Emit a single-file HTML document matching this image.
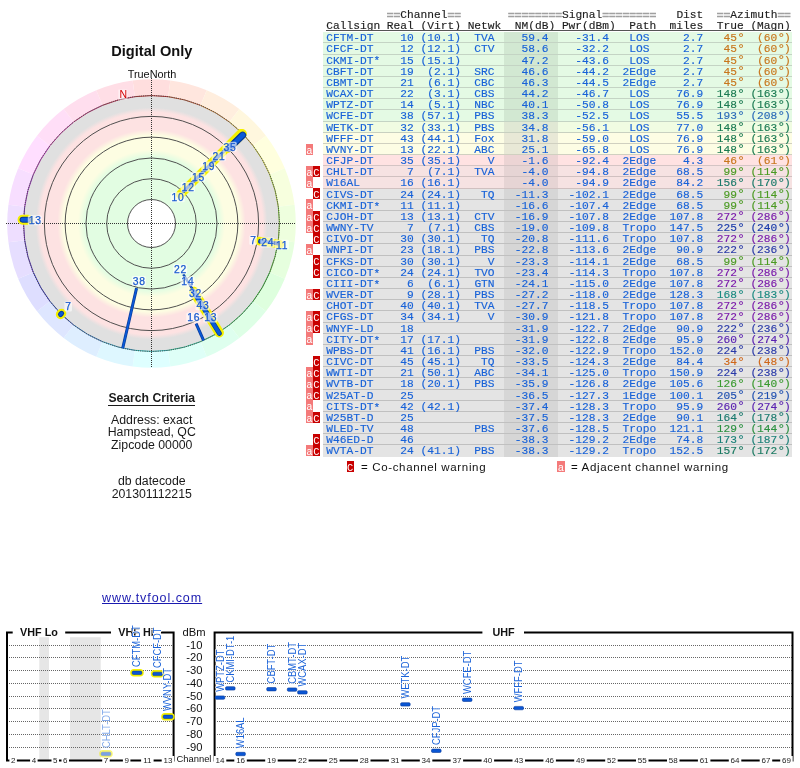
<!DOCTYPE html>
<html><head><meta charset="utf-8"><title>TV Signal Analysis</title><style>
html,body{margin:0;padding:0;background:#fff;}
body{width:800px;height:768px;overflow:hidden;position:relative;}
#wrap{position:absolute;left:0;top:0;width:800px;height:768px;will-change:transform;}
.tx{position:absolute;left:326.25px;font-family:"Liberation Mono",monospace;font-size:11.22px;line-height:11.18px;white-space:pre;color:#1862d8;-webkit-text-stroke:0.15px currentColor;}
.hd{color:#1e1e1e;}
.ast{position:relative;top:0.8px;}
.dg{display:inline-block;width:6.733px;font-size:13.5px;line-height:0;text-align:center;position:relative;top:0.6px;}
.eq{color:#a0a0a0;-webkit-text-stroke:0.7px #a0a0a0;position:relative;top:0.6px;}
.rb{position:absolute;left:323px;width:469px;height:11.18px;}
.nb{position:absolute;left:504px;width:54px;height:11.18px;}
.bd{position:absolute;left:323px;width:469px;height:1px;}
.wa,.wc{position:absolute;height:11.18px;line-height:15.4px;overflow:hidden;font-family:"Liberation Mono",monospace;font-size:10.5px;color:#fff;text-align:center;}
.wa{left:306px;width:6.8px;background:#f47a7a;}
.wc{left:312.8px;width:7.2px;background:#c80000;}
.lg{position:absolute;font-family:"Liberation Sans",sans-serif;font-size:11.5px;letter-spacing:0.65px;color:#111;white-space:pre;line-height:13px;}
.sc{position:absolute;left:0;width:303.5px;text-align:center;font-family:"Liberation Sans",sans-serif;color:#1a1a1a;white-space:pre;}
</style></head><body><div id="wrap">
<svg style="position:absolute;left:0;top:0" width="304" height="380" viewBox="0 0 304 380">
<defs><radialGradient id="rg" gradientUnits="userSpaceOnUse" cx="151.5" cy="223.5" r="128">
<stop offset="0.000" stop-color="#e2fde2"/>
<stop offset="0.520" stop-color="#e2fde2"/>
<stop offset="0.575" stop-color="#fdfde2"/>
<stop offset="0.690" stop-color="#fdfde2"/>
<stop offset="0.735" stop-color="#fde2e2"/>
<stop offset="0.870" stop-color="#fde2e2"/>
<stop offset="0.905" stop-color="#e0e0e0"/>
<stop offset="1.000" stop-color="#e0e0e0"/>
</radialGradient></defs>
<path d="M132.67 80.43 A144.30 144.30 0 0 1 170.33 80.43 L168.14 97.09 A127.50 127.50 0 0 0 134.86 97.09 Z" fill="#ffdede"/>
<path d="M170.33 80.43 A144.30 144.30 0 0 1 206.72 90.18 L200.29 105.71 A127.50 127.50 0 0 0 168.14 97.09 Z" fill="#ffe6de"/>
<path d="M206.72 90.18 A144.30 144.30 0 0 1 239.34 109.02 L229.12 122.35 A127.50 127.50 0 0 0 200.29 105.71 Z" fill="#ffeede"/>
<path d="M239.34 109.02 A144.30 144.30 0 0 1 265.98 135.66 L252.65 145.88 A127.50 127.50 0 0 0 229.12 122.35 Z" fill="#fff7de"/>
<path d="M265.98 135.66 A144.30 144.30 0 0 1 284.82 168.28 L269.29 174.71 A127.50 127.50 0 0 0 252.65 145.88 Z" fill="#ffffde"/>
<path d="M284.82 168.28 A144.30 144.30 0 0 1 294.57 204.67 L277.91 206.86 A127.50 127.50 0 0 0 269.29 174.71 Z" fill="#f7ffde"/>
<path d="M294.57 204.67 A144.30 144.30 0 0 1 294.57 242.33 L277.91 240.14 A127.50 127.50 0 0 0 277.91 206.86 Z" fill="#eeffde"/>
<path d="M294.57 242.33 A144.30 144.30 0 0 1 284.82 278.72 L269.29 272.29 A127.50 127.50 0 0 0 277.91 240.14 Z" fill="#e6ffde"/>
<path d="M284.82 278.72 A144.30 144.30 0 0 1 265.98 311.34 L252.65 301.12 A127.50 127.50 0 0 0 269.29 272.29 Z" fill="#deffde"/>
<path d="M265.98 311.34 A144.30 144.30 0 0 1 239.34 337.98 L229.12 324.65 A127.50 127.50 0 0 0 252.65 301.12 Z" fill="#deffe6"/>
<path d="M239.34 337.98 A144.30 144.30 0 0 1 206.72 356.82 L200.29 341.29 A127.50 127.50 0 0 0 229.12 324.65 Z" fill="#deffee"/>
<path d="M206.72 356.82 A144.30 144.30 0 0 1 170.33 366.57 L168.14 349.91 A127.50 127.50 0 0 0 200.29 341.29 Z" fill="#defff7"/>
<path d="M170.33 366.57 A144.30 144.30 0 0 1 132.67 366.57 L134.86 349.91 A127.50 127.50 0 0 0 168.14 349.91 Z" fill="#deffff"/>
<path d="M132.67 366.57 A144.30 144.30 0 0 1 96.28 356.82 L102.71 341.29 A127.50 127.50 0 0 0 134.86 349.91 Z" fill="#def7ff"/>
<path d="M96.28 356.82 A144.30 144.30 0 0 1 63.66 337.98 L73.88 324.65 A127.50 127.50 0 0 0 102.71 341.29 Z" fill="#deeeff"/>
<path d="M63.66 337.98 A144.30 144.30 0 0 1 37.02 311.34 L50.35 301.12 A127.50 127.50 0 0 0 73.88 324.65 Z" fill="#dee6ff"/>
<path d="M37.02 311.34 A144.30 144.30 0 0 1 18.18 278.72 L33.71 272.29 A127.50 127.50 0 0 0 50.35 301.12 Z" fill="#dedeff"/>
<path d="M18.18 278.72 A144.30 144.30 0 0 1 8.43 242.33 L25.09 240.14 A127.50 127.50 0 0 0 33.71 272.29 Z" fill="#e6deff"/>
<path d="M8.43 242.33 A144.30 144.30 0 0 1 8.43 204.67 L25.09 206.86 A127.50 127.50 0 0 0 25.09 240.14 Z" fill="#eedeff"/>
<path d="M8.43 204.67 A144.30 144.30 0 0 1 18.18 168.28 L33.71 174.71 A127.50 127.50 0 0 0 25.09 206.86 Z" fill="#f7deff"/>
<path d="M18.18 168.28 A144.30 144.30 0 0 1 37.02 135.66 L50.35 145.88 A127.50 127.50 0 0 0 33.71 174.71 Z" fill="#ffdeff"/>
<path d="M37.02 135.66 A144.30 144.30 0 0 1 63.66 109.02 L73.88 122.35 A127.50 127.50 0 0 0 50.35 145.88 Z" fill="#ffdef7"/>
<path d="M63.66 109.02 A144.30 144.30 0 0 1 96.28 90.18 L102.71 105.71 A127.50 127.50 0 0 0 73.88 122.35 Z" fill="#ffdeee"/>
<path d="M96.28 90.18 A144.30 144.30 0 0 1 132.67 80.43 L134.86 97.09 A127.50 127.50 0 0 0 102.71 105.71 Z" fill="#ffdee6"/>
<circle cx="151.5" cy="223.5" r="128" fill="url(#rg)"/>
<circle cx="151.5" cy="223.5" r="24" fill="#fff"/>
<circle cx="151.5" cy="223.5" r="24.00" fill="none" stroke="#484848" stroke-width="0.95"/>
<circle cx="151.5" cy="223.5" r="44.78" fill="none" stroke="#484848" stroke-width="0.95"/>
<circle cx="151.5" cy="223.5" r="65.56" fill="none" stroke="#484848" stroke-width="0.95"/>
<circle cx="151.5" cy="223.5" r="86.34" fill="none" stroke="#484848" stroke-width="0.95"/>
<circle cx="151.5" cy="223.5" r="107.12" fill="none" stroke="#484848" stroke-width="0.95"/>
<path d="M134.81 96.69 A127.90 127.90 0 0 1 168.19 96.69" fill="none" stroke="#b23434" stroke-width="1"/>
<path d="M168.19 96.69 A127.90 127.90 0 0 1 200.45 105.34" fill="none" stroke="#b25334" stroke-width="1"/>
<path d="M200.45 105.34 A127.90 127.90 0 0 1 229.36 122.03" fill="none" stroke="#b27334" stroke-width="1"/>
<path d="M229.36 122.03 A127.90 127.90 0 0 1 252.97 145.64" fill="none" stroke="#b29234" stroke-width="1"/>
<path d="M252.97 145.64 A127.90 127.90 0 0 1 269.66 174.55" fill="none" stroke="#b2b234" stroke-width="1"/>
<path d="M269.66 174.55 A127.90 127.90 0 0 1 278.31 206.81" fill="none" stroke="#92b234" stroke-width="1"/>
<path d="M278.31 206.81 A127.90 127.90 0 0 1 278.31 240.19" fill="none" stroke="#73b234" stroke-width="1"/>
<path d="M278.31 240.19 A127.90 127.90 0 0 1 269.66 272.45" fill="none" stroke="#53b234" stroke-width="1"/>
<path d="M269.66 272.45 A127.90 127.90 0 0 1 252.97 301.36" fill="none" stroke="#34b234" stroke-width="1"/>
<path d="M252.97 301.36 A127.90 127.90 0 0 1 229.36 324.97" fill="none" stroke="#34b253" stroke-width="1"/>
<path d="M229.36 324.97 A127.90 127.90 0 0 1 200.45 341.66" fill="none" stroke="#34b273" stroke-width="1"/>
<path d="M200.45 341.66 A127.90 127.90 0 0 1 168.19 350.31" fill="none" stroke="#34b292" stroke-width="1"/>
<path d="M168.19 350.31 A127.90 127.90 0 0 1 134.81 350.31" fill="none" stroke="#34b2b2" stroke-width="1"/>
<path d="M134.81 350.31 A127.90 127.90 0 0 1 102.55 341.66" fill="none" stroke="#3492b2" stroke-width="1"/>
<path d="M102.55 341.66 A127.90 127.90 0 0 1 73.64 324.97" fill="none" stroke="#3473b2" stroke-width="1"/>
<path d="M73.64 324.97 A127.90 127.90 0 0 1 50.03 301.36" fill="none" stroke="#3453b2" stroke-width="1"/>
<path d="M50.03 301.36 A127.90 127.90 0 0 1 33.34 272.45" fill="none" stroke="#3434b2" stroke-width="1"/>
<path d="M33.34 272.45 A127.90 127.90 0 0 1 24.69 240.19" fill="none" stroke="#5334b2" stroke-width="1"/>
<path d="M24.69 240.19 A127.90 127.90 0 0 1 24.69 206.81" fill="none" stroke="#7334b2" stroke-width="1"/>
<path d="M24.69 206.81 A127.90 127.90 0 0 1 33.34 174.55" fill="none" stroke="#9234b2" stroke-width="1"/>
<path d="M33.34 174.55 A127.90 127.90 0 0 1 50.03 145.64" fill="none" stroke="#b234b2" stroke-width="1"/>
<path d="M50.03 145.64 A127.90 127.90 0 0 1 73.64 122.03" fill="none" stroke="#b23492" stroke-width="1"/>
<path d="M73.64 122.03 A127.90 127.90 0 0 1 102.55 105.34" fill="none" stroke="#b23473" stroke-width="1"/>
<path d="M102.55 105.34 A127.90 127.90 0 0 1 134.81 96.69" fill="none" stroke="#b23453" stroke-width="1"/>
<circle cx="151.5" cy="223.5" r="127.90" fill="none" stroke="#404040" stroke-width="1" stroke-dasharray="1 1.2"/>
<line x1="6" y1="223.5" x2="296" y2="223.5" stroke="#333" stroke-width="1" stroke-dasharray="1 1"/>
<line x1="151.5" y1="78" x2="151.5" y2="368" stroke="#333" stroke-width="1" stroke-dasharray="1 1"/>
<text x="151.8" y="55.9" text-anchor="middle" font-family="Liberation Sans" font-weight="bold" font-size="14.6" fill="#111">Digital Only</text>
<text x="152" y="77.8" text-anchor="middle" font-family="Liberation Sans" font-size="10.9" fill="#111">TrueNorth</text>
<rect x="118.4" y="89.6" width="9" height="10" fill="#fff" fill-opacity="0.55"/>
<text x="123.3" y="97.7" text-anchor="middle" font-family="Liberation Sans" font-size="10.5" fill="#d40000">N</text>
<line x1="180.39" y1="194.41" x2="240.99" y2="133.38" stroke="#f4f000" stroke-width="9.00" stroke-linecap="round" stroke-opacity="1.00"/>
<line x1="193.66" y1="291.49" x2="219.21" y2="332.71" stroke="#f4f000" stroke-width="9.50" stroke-linecap="round" stroke-opacity="1.00"/>
<line x1="259.10" y1="240.93" x2="279.83" y2="244.28" stroke="#f4f000" stroke-width="8.50" stroke-linecap="round" stroke-opacity="1.00"/>
<line x1="28.05" y1="219.84" x2="22.56" y2="219.67" stroke="#f4f000" stroke-width="10.00" stroke-linecap="round" stroke-opacity="1.00"/>
<line x1="61.56" y1="313.44" x2="60.57" y2="314.43" stroke="#f4f000" stroke-width="9.50" stroke-linecap="round" stroke-opacity="1.00"/>
<line x1="227.56" y1="148.24" x2="242.13" y2="133.82" stroke="#f4f000" stroke-width="9.50" stroke-linecap="round" stroke-opacity="1.00"/>
<line x1="182.61" y1="192.39" x2="241.30" y2="133.70" stroke="#0a3a98" stroke-width="3.00" stroke-linecap="butt" stroke-opacity="1.00"/>
<line x1="182.61" y1="192.39" x2="241.30" y2="133.70" stroke="#0a5ad8" stroke-width="1.60" stroke-linecap="butt" stroke-opacity="1.00"/>
<line x1="229.06" y1="148.34" x2="242.70" y2="135.12" stroke="#0a3a98" stroke-width="7.00" stroke-linecap="round" stroke-opacity="1.00"/>
<line x1="229.06" y1="148.34" x2="242.70" y2="135.12" stroke="#0a5ad8" stroke-width="5.00" stroke-linecap="round" stroke-opacity="1.00"/>
<line x1="227.47" y1="146.73" x2="240.48" y2="133.58" stroke="#0a3a98" stroke-width="0.70" stroke-linecap="butt" stroke-opacity="1.00"/>
<line x1="230.61" y1="149.98" x2="244.17" y2="137.39" stroke="#0a3a98" stroke-width="0.70" stroke-linecap="butt" stroke-opacity="1.00"/>
<line x1="183.30" y1="274.38" x2="219.33" y2="332.05" stroke="#0a3a98" stroke-width="2.40" stroke-linecap="butt" stroke-opacity="1.00"/>
<line x1="183.30" y1="274.38" x2="219.33" y2="332.05" stroke="#0a5ad8" stroke-width="1.00" stroke-linecap="butt" stroke-opacity="1.00"/>
<line x1="193.54" y1="291.56" x2="219.29" y2="333.25" stroke="#0a3a98" stroke-width="5.00" stroke-linecap="round" stroke-opacity="1.00"/>
<line x1="193.54" y1="291.56" x2="219.29" y2="333.25" stroke="#0a5ad8" stroke-width="3.40" stroke-linecap="round" stroke-opacity="1.00"/>
<line x1="136.56" y1="288.20" x2="122.71" y2="348.22" stroke="#0a3a98" stroke-width="3.00" stroke-linecap="butt" stroke-opacity="1.00"/>
<line x1="136.56" y1="288.20" x2="122.71" y2="348.22" stroke="#0a5ad8" stroke-width="1.60" stroke-linecap="butt" stroke-opacity="1.00"/>
<line x1="196.12" y1="323.72" x2="203.56" y2="340.43" stroke="#0a3a98" stroke-width="3.00" stroke-linecap="butt" stroke-opacity="1.00"/>
<line x1="196.12" y1="323.72" x2="203.56" y2="340.43" stroke="#0a5ad8" stroke-width="1.60" stroke-linecap="butt" stroke-opacity="1.00"/>
<line x1="261.13" y1="240.86" x2="277.92" y2="243.52" stroke="#0a3a98" stroke-width="3.00" stroke-linecap="butt" stroke-opacity="1.00"/>
<line x1="261.13" y1="240.86" x2="277.92" y2="243.52" stroke="#0a5ad8" stroke-width="1.60" stroke-linecap="butt" stroke-opacity="1.00"/>
<line x1="260.55" y1="241.36" x2="262.03" y2="241.60" stroke="#0a3a98" stroke-width="5.00" stroke-linecap="round" stroke-opacity="1.00"/>
<line x1="260.55" y1="241.36" x2="262.03" y2="241.60" stroke="#0a5ad8" stroke-width="3.40" stroke-linecap="round" stroke-opacity="1.00"/>
<line x1="273.97" y1="242.90" x2="278.42" y2="243.60" stroke="#0a3a98" stroke-width="3.60" stroke-linecap="butt" stroke-opacity="1.00"/>
<line x1="28.05" y1="219.84" x2="22.56" y2="219.67" stroke="#0a3a98" stroke-width="6.00" stroke-linecap="round" stroke-opacity="1.00"/>
<line x1="28.05" y1="219.84" x2="22.56" y2="219.67" stroke="#0a5ad8" stroke-width="4.00" stroke-linecap="round" stroke-opacity="1.00"/>
<line x1="61.56" y1="313.44" x2="60.57" y2="314.43" stroke="#0a3a98" stroke-width="5.20" stroke-linecap="round" stroke-opacity="1.00"/>
<line x1="61.56" y1="313.44" x2="60.57" y2="314.43" stroke="#0a5ad8" stroke-width="3.20" stroke-linecap="round" stroke-opacity="1.00"/>
<rect x="170.6" y="192.3" width="14.2" height="10" rx="1.5" fill="#fff" fill-opacity="0.62"/>
<text x="178.1" y="201.0" text-anchor="middle" font-family="Liberation Sans" font-size="10.3" letter-spacing="0.8" fill="#1a5ad0" stroke="#1a5ad0" stroke-width="0.25">10</text>
<rect x="180.8" y="182.1" width="14.2" height="10" rx="1.5" fill="#fff" fill-opacity="0.62"/>
<text x="188.3" y="190.8" text-anchor="middle" font-family="Liberation Sans" font-size="10.3" letter-spacing="0.8" fill="#1a5ad0" stroke="#1a5ad0" stroke-width="0.25">12</text>
<rect x="191.1" y="171.8" width="14.2" height="10" rx="1.5" fill="#fff" fill-opacity="0.62"/>
<text x="198.6" y="180.5" text-anchor="middle" font-family="Liberation Sans" font-size="10.3" letter-spacing="0.8" fill="#1a5ad0" stroke="#1a5ad0" stroke-width="0.25">15</text>
<rect x="201.3" y="161.6" width="14.2" height="10" rx="1.5" fill="#fff" fill-opacity="0.62"/>
<text x="208.8" y="170.3" text-anchor="middle" font-family="Liberation Sans" font-size="10.3" letter-spacing="0.8" fill="#1a5ad0" stroke="#1a5ad0" stroke-width="0.25">19</text>
<rect x="211.6" y="151.3" width="14.2" height="10" rx="1.5" fill="#fff" fill-opacity="0.62"/>
<text x="219.1" y="160.0" text-anchor="middle" font-family="Liberation Sans" font-size="10.3" letter-spacing="0.8" fill="#1a5ad0" stroke="#1a5ad0" stroke-width="0.25">21</text>
<rect x="222.5" y="141.8" width="14.2" height="10" rx="1.5" fill="#fff" fill-opacity="0.62"/>
<text x="230.0" y="150.5" text-anchor="middle" font-family="Liberation Sans" font-size="10.3" letter-spacing="0.8" fill="#1a5ad0" stroke="#1a5ad0" stroke-width="0.25">35</text>
<rect x="173.0" y="264.3" width="14.2" height="10" rx="1.5" fill="#fff" fill-opacity="0.62"/>
<text x="180.5" y="273.0" text-anchor="middle" font-family="Liberation Sans" font-size="10.3" letter-spacing="0.8" fill="#1a5ad0" stroke="#1a5ad0" stroke-width="0.25">22</text>
<rect x="180.4" y="276.2" width="14.2" height="10" rx="1.5" fill="#fff" fill-opacity="0.62"/>
<text x="187.9" y="284.9" text-anchor="middle" font-family="Liberation Sans" font-size="10.3" letter-spacing="0.8" fill="#1a5ad0" stroke="#1a5ad0" stroke-width="0.25">14</text>
<rect x="188.1" y="288.4" width="14.2" height="10" rx="1.5" fill="#fff" fill-opacity="0.62"/>
<text x="195.6" y="297.1" text-anchor="middle" font-family="Liberation Sans" font-size="10.3" letter-spacing="0.8" fill="#1a5ad0" stroke="#1a5ad0" stroke-width="0.25">32</text>
<rect x="195.5" y="300.3" width="14.2" height="10" rx="1.5" fill="#fff" fill-opacity="0.62"/>
<text x="203.0" y="309.0" text-anchor="middle" font-family="Liberation Sans" font-size="10.3" letter-spacing="0.8" fill="#1a5ad0" stroke="#1a5ad0" stroke-width="0.25">43</text>
<rect x="203.2" y="312.6" width="14.2" height="10" rx="1.5" fill="#fff" fill-opacity="0.62"/>
<text x="210.7" y="321.3" text-anchor="middle" font-family="Liberation Sans" font-size="10.3" letter-spacing="0.8" fill="#1a5ad0" stroke="#1a5ad0" stroke-width="0.25">13</text>
<rect x="186.3" y="312.6" width="14.2" height="10" rx="1.5" fill="#fff" fill-opacity="0.62"/>
<text x="193.8" y="321.3" text-anchor="middle" font-family="Liberation Sans" font-size="10.3" letter-spacing="0.8" fill="#1a5ad0" stroke="#1a5ad0" stroke-width="0.25">16</text>
<rect x="131.8" y="276.0" width="14.2" height="10" rx="1.5" fill="#fff" fill-opacity="0.62"/>
<text x="139.3" y="284.7" text-anchor="middle" font-family="Liberation Sans" font-size="10.3" letter-spacing="0.8" fill="#1a5ad0" stroke="#1a5ad0" stroke-width="0.25">38</text>
<rect x="249.3" y="235.1" width="7.6" height="10" rx="1.5" fill="#fff" fill-opacity="0.62"/>
<text x="253.5" y="243.8" text-anchor="middle" font-family="Liberation Sans" font-size="10.3" letter-spacing="0.8" fill="#1a5ad0" stroke="#1a5ad0" stroke-width="0.25">7</text>
<rect x="260.3" y="237.5" width="14.2" height="10" rx="1.5" fill="#fff" fill-opacity="0.62"/>
<text x="267.8" y="246.2" text-anchor="middle" font-family="Liberation Sans" font-size="10.3" letter-spacing="0.8" fill="#1a5ad0" stroke="#1a5ad0" stroke-width="0.25">24</text>
<rect x="274.7" y="239.8" width="14.2" height="10" rx="1.5" fill="#fff" fill-opacity="0.62"/>
<text x="282.2" y="248.5" text-anchor="middle" font-family="Liberation Sans" font-size="10.3" letter-spacing="0.8" fill="#1a5ad0" stroke="#1a5ad0" stroke-width="0.25">11</text>
<rect x="27.8" y="215.2" width="14.2" height="10" rx="1.5" fill="#fff" fill-opacity="0.62"/>
<text x="35.3" y="223.9" text-anchor="middle" font-family="Liberation Sans" font-size="10.3" letter-spacing="0.8" fill="#1a5ad0" stroke="#1a5ad0" stroke-width="0.25">13</text>
<rect x="64.4" y="301.5" width="7.6" height="10" rx="1.5" fill="#fff" fill-opacity="0.62"/>
<text x="68.6" y="310.2" text-anchor="middle" font-family="Liberation Sans" font-size="10.3" letter-spacing="0.8" fill="#1a5ad0" stroke="#1a5ad0" stroke-width="0.25">7</text>
</svg>
<div class="tx hd" style="top:10.00px">         <span class="eq">==</span>Channel<span class="eq">==</span>       <span class="eq">========</span>Signal<span class="eq">========</span>   Dist  <span class="eq">==</span>Azimuth<span class="eq">==</span></div>
<div class="tx hd" style="top:21.20px">Callsign Real (Virt) Netwk  NM(dB) Pwr(dBm)  Path  miles  True (Magn)</div>
<div style="position:absolute;left:326px;top:30px;width:465px;height:1px;background:#555"></div>
<div class="rb" style="top:32.233px;height:11.167px;background:#e4fae4"></div>
<div class="nb" style="top:32.233px;height:11.167px;background:#d2e8d2"></div>
<div class="bd" style="top:42.400px;background:#c4d4c4"></div>
<div class="tx" style="top:33.233px">CFTM-DT    10 (10.1)  TVA    59.4    -31.4   LOS     2.7<span style="color:#c8761c">   45<span class="dg">°</span>  (60<span class="dg">°</span>)</span></div>
<div class="rb" style="top:43.400px;height:11.167px;background:#e4fae4"></div>
<div class="nb" style="top:43.400px;height:11.167px;background:#d2e8d2"></div>
<div class="bd" style="top:53.567px;background:#c4d4c4"></div>
<div class="tx" style="top:44.400px">CFCF-DT    12 (12.1)  CTV    58.6    -32.2   LOS     2.7<span style="color:#c8761c">   45<span class="dg">°</span>  (60<span class="dg">°</span>)</span></div>
<div class="rb" style="top:54.567px;height:11.167px;background:#e4fae4"></div>
<div class="nb" style="top:54.567px;height:11.167px;background:#d2e8d2"></div>
<div class="bd" style="top:64.733px;background:#c4d4c4"></div>
<div class="tx" style="top:55.567px">CKMI-DT<span class="ast">*</span>   15 (15.1)         47.2    -43.6   LOS     2.7<span style="color:#c8761c">   45<span class="dg">°</span>  (60<span class="dg">°</span>)</span></div>
<div class="rb" style="top:65.733px;height:11.167px;background:#e4fae4"></div>
<div class="nb" style="top:65.733px;height:11.167px;background:#d2e8d2"></div>
<div class="bd" style="top:75.900px;background:#c4d4c4"></div>
<div class="tx" style="top:66.733px">CBFT-DT    19  (2.1)  SRC    46.6    -44.2  2Edge    2.7<span style="color:#c8761c">   45<span class="dg">°</span>  (60<span class="dg">°</span>)</span></div>
<div class="rb" style="top:76.900px;height:11.167px;background:#e4fae4"></div>
<div class="nb" style="top:76.900px;height:11.167px;background:#d2e8d2"></div>
<div class="bd" style="top:87.067px;background:#c4d4c4"></div>
<div class="tx" style="top:77.900px">CBMT-DT    21  (6.1)  CBC    46.3    -44.5  2Edge    2.7<span style="color:#c8761c">   45<span class="dg">°</span>  (60<span class="dg">°</span>)</span></div>
<div class="rb" style="top:88.067px;height:11.167px;background:#e4fae4"></div>
<div class="nb" style="top:88.067px;height:11.167px;background:#d2e8d2"></div>
<div class="bd" style="top:98.233px;background:#c4d4c4"></div>
<div class="tx" style="top:89.067px">WCAX-DT    22  (3.1)  CBS    44.2    -46.7   LOS    76.9<span style="color:#1a7a52">  148<span class="dg">°</span> (163<span class="dg">°</span>)</span></div>
<div class="rb" style="top:99.234px;height:11.167px;background:#e4fae4"></div>
<div class="nb" style="top:99.234px;height:11.167px;background:#d2e8d2"></div>
<div class="bd" style="top:109.400px;background:#c4d4c4"></div>
<div class="tx" style="top:100.234px">WPTZ-DT    14  (5.1)  NBC    40.1    -50.8   LOS    76.9<span style="color:#1a7a52">  148<span class="dg">°</span> (163<span class="dg">°</span>)</span></div>
<div class="rb" style="top:110.400px;height:11.167px;background:#e4fae4"></div>
<div class="nb" style="top:110.400px;height:11.167px;background:#d2e8d2"></div>
<div class="bd" style="top:120.567px;background:#c4d4c4"></div>
<div class="tx" style="top:111.400px">WCFE-DT    38 (57.1)  PBS    38.3    -52.5   LOS    55.5<span style="color:#2a6ab8">  193<span class="dg">°</span> (208<span class="dg">°</span>)</span></div>
<div class="rb" style="top:121.567px;height:11.167px;background:#f0fce2"></div>
<div class="nb" style="top:121.567px;height:11.167px;background:#e0e8d4"></div>
<div class="bd" style="top:131.734px;background:#c8d0c0"></div>
<div class="tx" style="top:122.567px">WETK-DT    32 (33.1)  PBS    34.8    -56.1   LOS    77.0<span style="color:#1a7a52">  148<span class="dg">°</span> (163<span class="dg">°</span>)</span></div>
<div class="rb" style="top:132.734px;height:11.167px;background:#fdfde4"></div>
<div class="nb" style="top:132.734px;height:11.167px;background:#e8e8d6"></div>
<div class="bd" style="top:142.900px;background:#d0d0c0"></div>
<div class="tx" style="top:133.734px">WFFF-DT    43 (44.1)  Fox    31.8    -59.0   LOS    76.9<span style="color:#1a7a52">  148<span class="dg">°</span> (163<span class="dg">°</span>)</span></div>
<div class="rb" style="top:143.900px;height:11.167px;background:#fdfde4"></div>
<div class="nb" style="top:143.900px;height:11.167px;background:#e8e8d6"></div>
<div class="bd" style="top:154.067px;background:#d0d0c0"></div>
<div class="tx" style="top:144.900px">WVNY-DT    13 (22.1)  ABC    25.1    -65.8   LOS    76.9<span style="color:#1a7a52">  148<span class="dg">°</span> (163<span class="dg">°</span>)</span></div>
<div class="wa" style="top:143.600px">a</div>
<div class="rb" style="top:155.067px;height:11.167px;background:#ffe2e2"></div>
<div class="nb" style="top:155.067px;height:11.167px;background:#ecd4d4"></div>
<div class="bd" style="top:165.234px;background:#d4c4c4"></div>
<div class="tx" style="top:156.067px">CFJP-DT    35 (35.1)    V    -1.6    -92.4  2Edge    4.3<span style="color:#c8761c">   46<span class="dg">°</span>  (61<span class="dg">°</span>)</span></div>
<div class="rb" style="top:166.234px;height:11.167px;background:#f6e2e2"></div>
<div class="nb" style="top:166.234px;height:11.167px;background:#e6d4d4"></div>
<div class="bd" style="top:176.400px;background:#d0c0c0"></div>
<div class="tx" style="top:167.234px">CHLT-DT     7  (7.1)  TVA    -4.0    -94.8  2Edge   68.5<span style="color:#4a9a22">   99<span class="dg">°</span> (114<span class="dg">°</span>)</span></div>
<div class="wa" style="top:165.934px">a</div>
<div class="wc" style="top:165.934px">C</div>
<div class="rb" style="top:177.400px;height:11.167px;background:#f6e2e2"></div>
<div class="nb" style="top:177.400px;height:11.167px;background:#e6d4d4"></div>
<div class="bd" style="top:187.567px;background:#d0c0c0"></div>
<div class="tx" style="top:178.400px">W16AL      16 (16.1)         -4.0    -94.9  2Edge   84.2<span style="color:#1a7a6a">  156<span class="dg">°</span> (170<span class="dg">°</span>)</span></div>
<div class="wa" style="top:177.100px">a</div>
<div class="rb" style="top:188.567px;height:11.167px;background:#e4e4e4"></div>
<div class="nb" style="top:188.567px;height:11.167px;background:#d6d6d6"></div>
<div class="bd" style="top:198.734px;background:#c0c0c0"></div>
<div class="tx" style="top:189.567px">CIVS-DT    24 (24.1)   TQ   -11.3   -102.1  2Edge   68.5<span style="color:#4a9a22">   99<span class="dg">°</span> (114<span class="dg">°</span>)</span></div>
<div class="wc" style="top:188.267px">C</div>
<div class="rb" style="top:199.734px;height:11.167px;background:#e4e4e4"></div>
<div class="nb" style="top:199.734px;height:11.167px;background:#d6d6d6"></div>
<div class="bd" style="top:209.901px;background:#c0c0c0"></div>
<div class="tx" style="top:200.734px">CKMI-DT<span class="ast">*</span>   11 (11.1)        -16.6   -107.4  2Edge   68.5<span style="color:#4a9a22">   99<span class="dg">°</span> (114<span class="dg">°</span>)</span></div>
<div class="wa" style="top:199.434px">a</div>
<div class="rb" style="top:210.901px;height:11.167px;background:#e4e4e4"></div>
<div class="nb" style="top:210.901px;height:11.167px;background:#d6d6d6"></div>
<div class="bd" style="top:221.067px;background:#c0c0c0"></div>
<div class="tx" style="top:211.901px">CJOH-DT    13 (13.1)  CTV   -16.9   -107.8  2Edge  107.8<span style="color:#7a1aaa">  272<span class="dg">°</span> (286<span class="dg">°</span>)</span></div>
<div class="wa" style="top:210.601px">a</div>
<div class="wc" style="top:210.601px">C</div>
<div class="rb" style="top:222.067px;height:11.167px;background:#e4e4e4"></div>
<div class="nb" style="top:222.067px;height:11.167px;background:#d6d6d6"></div>
<div class="bd" style="top:232.234px;background:#c0c0c0"></div>
<div class="tx" style="top:223.067px">WWNY-TV     7  (7.1)  CBS   -19.0   -109.8  Tropo  147.5<span style="color:#1a3aaa">  225<span class="dg">°</span> (240<span class="dg">°</span>)</span></div>
<div class="wa" style="top:221.767px">a</div>
<div class="wc" style="top:221.767px">C</div>
<div class="rb" style="top:233.234px;height:11.167px;background:#e4e4e4"></div>
<div class="nb" style="top:233.234px;height:11.167px;background:#d6d6d6"></div>
<div class="bd" style="top:243.401px;background:#c0c0c0"></div>
<div class="tx" style="top:234.234px">CIVO-DT    30 (30.1)   TQ   -20.8   -111.6  Tropo  107.8<span style="color:#7a1aaa">  272<span class="dg">°</span> (286<span class="dg">°</span>)</span></div>
<div class="wc" style="top:232.934px">C</div>
<div class="rb" style="top:244.401px;height:11.167px;background:#e4e4e4"></div>
<div class="nb" style="top:244.401px;height:11.167px;background:#d6d6d6"></div>
<div class="bd" style="top:254.567px;background:#c0c0c0"></div>
<div class="tx" style="top:245.401px">WNPI-DT    23 (18.1)  PBS   -22.8   -113.6  2Edge   90.9<span style="color:#2a3aa8">  222<span class="dg">°</span> (236<span class="dg">°</span>)</span></div>
<div class="wa" style="top:244.101px">a</div>
<div class="rb" style="top:255.567px;height:11.167px;background:#e4e4e4"></div>
<div class="nb" style="top:255.567px;height:11.167px;background:#d6d6d6"></div>
<div class="bd" style="top:265.734px;background:#c0c0c0"></div>
<div class="tx" style="top:256.567px">CFKS-DT    30 (30.1)    V   -23.3   -114.1  2Edge   68.5<span style="color:#4a9a22">   99<span class="dg">°</span> (114<span class="dg">°</span>)</span></div>
<div class="wc" style="top:255.267px">C</div>
<div class="rb" style="top:266.734px;height:11.167px;background:#e4e4e4"></div>
<div class="nb" style="top:266.734px;height:11.167px;background:#d6d6d6"></div>
<div class="bd" style="top:276.901px;background:#c0c0c0"></div>
<div class="tx" style="top:267.734px">CICO-DT<span class="ast">*</span>   24 (24.1)  TVO   -23.4   -114.3  Tropo  107.8<span style="color:#7a1aaa">  272<span class="dg">°</span> (286<span class="dg">°</span>)</span></div>
<div class="wc" style="top:266.434px">C</div>
<div class="rb" style="top:277.901px;height:11.167px;background:#e4e4e4"></div>
<div class="nb" style="top:277.901px;height:11.167px;background:#d6d6d6"></div>
<div class="bd" style="top:288.067px;background:#c0c0c0"></div>
<div class="tx" style="top:278.901px">CIII-DT<span class="ast">*</span>    6  (6.1)  GTN   -24.1   -115.0  2Edge  107.8<span style="color:#7a1aaa">  272<span class="dg">°</span> (286<span class="dg">°</span>)</span></div>
<div class="rb" style="top:289.067px;height:11.167px;background:#e4e4e4"></div>
<div class="nb" style="top:289.067px;height:11.167px;background:#d6d6d6"></div>
<div class="bd" style="top:299.234px;background:#c0c0c0"></div>
<div class="tx" style="top:290.067px">WVER-DT     9 (28.1)  PBS   -27.2   -118.0  2Edge  128.3<span style="color:#1a8a80">  168<span class="dg">°</span> (183<span class="dg">°</span>)</span></div>
<div class="wa" style="top:288.767px">a</div>
<div class="wc" style="top:288.767px">C</div>
<div class="rb" style="top:300.234px;height:11.167px;background:#e4e4e4"></div>
<div class="nb" style="top:300.234px;height:11.167px;background:#d6d6d6"></div>
<div class="bd" style="top:310.401px;background:#c0c0c0"></div>
<div class="tx" style="top:301.234px">CHOT-DT    40 (40.1)  TVA   -27.7   -118.5  Tropo  107.8<span style="color:#7a1aaa">  272<span class="dg">°</span> (286<span class="dg">°</span>)</span></div>
<div class="rb" style="top:311.401px;height:11.167px;background:#e4e4e4"></div>
<div class="nb" style="top:311.401px;height:11.167px;background:#d6d6d6"></div>
<div class="bd" style="top:321.567px;background:#c0c0c0"></div>
<div class="tx" style="top:312.401px">CFGS-DT    34 (34.1)    V   -30.9   -121.8  Tropo  107.8<span style="color:#7a1aaa">  272<span class="dg">°</span> (286<span class="dg">°</span>)</span></div>
<div class="wa" style="top:311.101px">a</div>
<div class="wc" style="top:311.101px">C</div>
<div class="rb" style="top:322.567px;height:11.167px;background:#e4e4e4"></div>
<div class="nb" style="top:322.567px;height:11.167px;background:#d6d6d6"></div>
<div class="bd" style="top:332.734px;background:#c0c0c0"></div>
<div class="tx" style="top:323.567px">WNYF-LD    18               -31.9   -122.7  2Edge   90.9<span style="color:#2a3aa8">  222<span class="dg">°</span> (236<span class="dg">°</span>)</span></div>
<div class="wa" style="top:322.267px">a</div>
<div class="wc" style="top:322.267px">C</div>
<div class="rb" style="top:333.734px;height:11.167px;background:#e4e4e4"></div>
<div class="nb" style="top:333.734px;height:11.167px;background:#d6d6d6"></div>
<div class="bd" style="top:343.901px;background:#c0c0c0"></div>
<div class="tx" style="top:334.734px">CITY-DT<span class="ast">*</span>   17 (17.1)        -31.9   -122.8  2Edge   95.9<span style="color:#5a22b0">  260<span class="dg">°</span> (274<span class="dg">°</span>)</span></div>
<div class="wa" style="top:333.434px">a</div>
<div class="rb" style="top:344.901px;height:11.167px;background:#e4e4e4"></div>
<div class="nb" style="top:344.901px;height:11.167px;background:#d6d6d6"></div>
<div class="bd" style="top:355.068px;background:#c0c0c0"></div>
<div class="tx" style="top:345.901px">WPBS-DT    41 (16.1)  PBS   -32.0   -122.9  Tropo  152.0<span style="color:#2a3aa8">  224<span class="dg">°</span> (238<span class="dg">°</span>)</span></div>
<div class="rb" style="top:356.068px;height:11.167px;background:#e4e4e4"></div>
<div class="nb" style="top:356.068px;height:11.167px;background:#d6d6d6"></div>
<div class="bd" style="top:366.234px;background:#c0c0c0"></div>
<div class="tx" style="top:357.068px">CIVC-DT    45 (45.1)   TQ   -33.5   -124.3  2Edge   84.4<span style="color:#d0681a">   34<span class="dg">°</span>  (48<span class="dg">°</span>)</span></div>
<div class="wc" style="top:355.768px">C</div>
<div class="rb" style="top:367.234px;height:11.167px;background:#e4e4e4"></div>
<div class="nb" style="top:367.234px;height:11.167px;background:#d6d6d6"></div>
<div class="bd" style="top:377.401px;background:#c0c0c0"></div>
<div class="tx" style="top:368.234px">WWTI-DT    21 (50.1)  ABC   -34.1   -125.0  Tropo  150.9<span style="color:#2a3aa8">  224<span class="dg">°</span> (238<span class="dg">°</span>)</span></div>
<div class="wa" style="top:366.934px">a</div>
<div class="wc" style="top:366.934px">C</div>
<div class="rb" style="top:378.401px;height:11.167px;background:#e4e4e4"></div>
<div class="nb" style="top:378.401px;height:11.167px;background:#d6d6d6"></div>
<div class="bd" style="top:388.568px;background:#c0c0c0"></div>
<div class="tx" style="top:379.401px">WVTB-DT    18 (20.1)  PBS   -35.9   -126.8  2Edge  105.6<span style="color:#3a9a30">  126<span class="dg">°</span> (140<span class="dg">°</span>)</span></div>
<div class="wa" style="top:378.101px">a</div>
<div class="wc" style="top:378.101px">C</div>
<div class="rb" style="top:389.568px;height:11.167px;background:#e4e4e4"></div>
<div class="nb" style="top:389.568px;height:11.167px;background:#d6d6d6"></div>
<div class="bd" style="top:399.734px;background:#c0c0c0"></div>
<div class="tx" style="top:390.568px">W25AT-D    25               -36.5   -127.3  1Edge  100.1<span style="color:#2050b0">  205<span class="dg">°</span> (219<span class="dg">°</span>)</span></div>
<div class="wa" style="top:389.268px">a</div>
<div class="wc" style="top:389.268px">C</div>
<div class="rb" style="top:400.734px;height:11.167px;background:#e4e4e4"></div>
<div class="nb" style="top:400.734px;height:11.167px;background:#d6d6d6"></div>
<div class="bd" style="top:410.901px;background:#c0c0c0"></div>
<div class="tx" style="top:401.734px">CITS-DT<span class="ast">*</span>   42 (42.1)        -37.4   -128.3  Tropo   95.9<span style="color:#5a22b0">  260<span class="dg">°</span> (274<span class="dg">°</span>)</span></div>
<div class="wa" style="top:400.434px">a</div>
<div class="rb" style="top:411.901px;height:11.167px;background:#e4e4e4"></div>
<div class="nb" style="top:411.901px;height:11.167px;background:#d6d6d6"></div>
<div class="bd" style="top:422.068px;background:#c0c0c0"></div>
<div class="tx" style="top:412.901px">W25BT-D    25               -37.5   -128.3  2Edge   90.1<span style="color:#1a7a6e">  164<span class="dg">°</span> (178<span class="dg">°</span>)</span></div>
<div class="wa" style="top:411.601px">a</div>
<div class="wc" style="top:411.601px">C</div>
<div class="rb" style="top:423.068px;height:11.167px;background:#e4e4e4"></div>
<div class="nb" style="top:423.068px;height:11.167px;background:#d6d6d6"></div>
<div class="bd" style="top:433.234px;background:#c0c0c0"></div>
<div class="tx" style="top:424.068px">WLED-TV    48         PBS   -37.6   -128.5  Tropo  121.1<span style="color:#2a9040">  129<span class="dg">°</span> (144<span class="dg">°</span>)</span></div>
<div class="rb" style="top:434.235px;height:11.167px;background:#e4e4e4"></div>
<div class="nb" style="top:434.235px;height:11.167px;background:#d6d6d6"></div>
<div class="bd" style="top:444.401px;background:#c0c0c0"></div>
<div class="tx" style="top:435.235px">W46ED-D    46               -38.3   -129.2  2Edge   74.8<span style="color:#1a8078">  173<span class="dg">°</span> (187<span class="dg">°</span>)</span></div>
<div class="wc" style="top:433.935px">C</div>
<div class="rb" style="top:445.401px;height:11.599px;background:#e4e4e4"></div>
<div class="nb" style="top:445.401px;height:11.599px;background:#d6d6d6"></div>
<div class="tx" style="top:446.401px">WVTA-DT    24 (41.1)  PBS   -38.3   -129.2  Tropo  152.5<span style="color:#1a7a62">  157<span class="dg">°</span> (172<span class="dg">°</span>)</span></div>
<div class="wa" style="top:445.101px">a</div>
<div class="wc" style="top:445.101px">C</div>
<div class="wc" style="left:346.5px;top:461px;height:11.3px;line-height:15.6px">C</div>
<div class="lg" style="left:361px;top:460.50px">= Co-channel warning</div>
<div class="wa" style="left:557.3px;width:7.4px;top:461px;height:11.3px;line-height:15.6px">a</div>
<div class="lg" style="left:571px;top:460.50px">= Adjacent channel warning</div>
<div class="sc" style="top:390.7px;font-size:12.2px;font-weight:bold;line-height:14px"><span style="border-bottom:1.3px solid #1a1a1a;padding-bottom:0px">Search Criteria</span></div>
<div class="sc" style="top:413.5px;font-size:12.3px;line-height:12.5px">Address: exact
Hampstead, QC
Zipcode 00000</div>
<div class="sc" style="top:475.3px;font-size:12.3px;line-height:12.8px">db datecode
201301112215</div>
<div style="position:absolute;left:102px;top:591px;font-family:'Liberation Sans',sans-serif;font-size:12.5px;letter-spacing:0.95px;color:#1a1ab0;text-decoration:underline;white-space:pre;line-height:14px">www.tvfool.com</div>
<svg style="position:absolute;left:0;top:610px" width="800" height="158" viewBox="0 610 800 158">
<rect x="39.3" y="637.2" width="9.7" height="123" fill="#e6e6e6"/>
<rect x="70" y="637.2" width="30.7" height="123" fill="#e6e6e6"/>
<line x1="9" y1="645.50" x2="173" y2="645.50" stroke="#666" stroke-width="1" stroke-dasharray="1 1"/>
<line x1="217" y1="645.50" x2="792" y2="645.50" stroke="#666" stroke-width="1" stroke-dasharray="1 1"/>
<text x="202.5" y="648.50" text-anchor="end" font-family="Liberation Sans" font-size="11.2" fill="#111">-10</text>
<line x1="9" y1="657.50" x2="173" y2="657.50" stroke="#666" stroke-width="1" stroke-dasharray="1 1"/>
<line x1="217" y1="657.50" x2="792" y2="657.50" stroke="#666" stroke-width="1" stroke-dasharray="1 1"/>
<text x="202.5" y="660.50" text-anchor="end" font-family="Liberation Sans" font-size="11.2" fill="#111">-20</text>
<line x1="9" y1="670.50" x2="173" y2="670.50" stroke="#666" stroke-width="1" stroke-dasharray="1 1"/>
<line x1="217" y1="670.50" x2="792" y2="670.50" stroke="#666" stroke-width="1" stroke-dasharray="1 1"/>
<text x="202.5" y="673.50" text-anchor="end" font-family="Liberation Sans" font-size="11.2" fill="#111">-30</text>
<line x1="9" y1="683.50" x2="173" y2="683.50" stroke="#666" stroke-width="1" stroke-dasharray="1 1"/>
<line x1="217" y1="683.50" x2="792" y2="683.50" stroke="#666" stroke-width="1" stroke-dasharray="1 1"/>
<text x="202.5" y="686.50" text-anchor="end" font-family="Liberation Sans" font-size="11.2" fill="#111">-40</text>
<line x1="9" y1="696.50" x2="173" y2="696.50" stroke="#666" stroke-width="1" stroke-dasharray="1 1"/>
<line x1="217" y1="696.50" x2="792" y2="696.50" stroke="#666" stroke-width="1" stroke-dasharray="1 1"/>
<text x="202.5" y="699.50" text-anchor="end" font-family="Liberation Sans" font-size="11.2" fill="#111">-50</text>
<line x1="9" y1="708.50" x2="173" y2="708.50" stroke="#666" stroke-width="1" stroke-dasharray="1 1"/>
<line x1="217" y1="708.50" x2="792" y2="708.50" stroke="#666" stroke-width="1" stroke-dasharray="1 1"/>
<text x="202.5" y="711.50" text-anchor="end" font-family="Liberation Sans" font-size="11.2" fill="#111">-60</text>
<line x1="9" y1="721.50" x2="173" y2="721.50" stroke="#666" stroke-width="1" stroke-dasharray="1 1"/>
<line x1="217" y1="721.50" x2="792" y2="721.50" stroke="#666" stroke-width="1" stroke-dasharray="1 1"/>
<text x="202.5" y="724.50" text-anchor="end" font-family="Liberation Sans" font-size="11.2" fill="#111">-70</text>
<line x1="9" y1="734.50" x2="173" y2="734.50" stroke="#666" stroke-width="1" stroke-dasharray="1 1"/>
<line x1="217" y1="734.50" x2="792" y2="734.50" stroke="#666" stroke-width="1" stroke-dasharray="1 1"/>
<text x="202.5" y="737.50" text-anchor="end" font-family="Liberation Sans" font-size="11.2" fill="#111">-80</text>
<line x1="9" y1="747.50" x2="173" y2="747.50" stroke="#666" stroke-width="1" stroke-dasharray="1 1"/>
<line x1="217" y1="747.50" x2="792" y2="747.50" stroke="#666" stroke-width="1" stroke-dasharray="1 1"/>
<text x="202.5" y="750.50" text-anchor="end" font-family="Liberation Sans" font-size="11.2" fill="#111">-90</text>
<text x="194" y="635.8" text-anchor="middle" font-family="Liberation Sans" font-size="11.2" fill="#111">dBm</text>
<path d="M12.7 632.4 H7 V760.4 H173.6 V632.4 H161" fill="none" stroke="#000" stroke-width="2"/>
<path d="M65.2 632.4 H111" fill="none" stroke="#000" stroke-width="2"/>
<text x="39" y="635.9" text-anchor="middle" font-family="Liberation Sans" font-weight="bold" font-size="10.8" fill="#111">VHF Lo</text>
<text x="136" y="635.9" text-anchor="middle" font-family="Liberation Sans" font-weight="bold" font-size="10.8" fill="#111">VHF Hi</text>
<path d="M482.4 632.4 H214.6 V760.4 H792.5 V632.4 H524" fill="none" stroke="#000" stroke-width="2"/>
<text x="503.5" y="636" text-anchor="middle" font-family="Liberation Sans" font-weight="bold" font-size="10.8" fill="#111">UHF</text>
<text x="194" y="761.5" text-anchor="middle" font-family="Liberation Sans" font-size="9.4" fill="#111">Channel</text>
<rect x="9.4" y="756" width="7.5" height="8" fill="#fff"/>
<text x="13.2" y="763" text-anchor="middle" font-family="Liberation Sans" font-size="8" fill="#222">2</text>
<rect x="30.1" y="756" width="7.5" height="8" fill="#fff"/>
<text x="33.9" y="763" text-anchor="middle" font-family="Liberation Sans" font-size="8" fill="#222">4</text>
<rect x="51.5" y="756" width="7.5" height="8" fill="#fff"/>
<text x="55.2" y="763" text-anchor="middle" font-family="Liberation Sans" font-size="8" fill="#222">5</text>
<rect x="61.5" y="756" width="7.5" height="8" fill="#fff"/>
<text x="65.2" y="763" text-anchor="middle" font-family="Liberation Sans" font-size="8" fill="#222">6</text>
<rect x="102.2" y="756" width="7.5" height="8" fill="#fff"/>
<text x="106.0" y="763" text-anchor="middle" font-family="Liberation Sans" font-size="8" fill="#222">7</text>
<rect x="122.9" y="756" width="7.5" height="8" fill="#fff"/>
<text x="126.7" y="763" text-anchor="middle" font-family="Liberation Sans" font-size="8" fill="#222">9</text>
<rect x="141.1" y="756" width="12.5" height="8" fill="#fff"/>
<text x="147.3" y="763" text-anchor="middle" font-family="Liberation Sans" font-size="8" fill="#222">11</text>
<rect x="161.7" y="756" width="12.5" height="8" fill="#fff"/>
<text x="168.0" y="763" text-anchor="middle" font-family="Liberation Sans" font-size="8" fill="#222">13</text>
<rect x="213.8" y="756" width="12.5" height="8" fill="#fff"/>
<text x="220.0" y="763" text-anchor="middle" font-family="Liberation Sans" font-size="8" fill="#222">14</text>
<rect x="234.3" y="756" width="12.5" height="8" fill="#fff"/>
<text x="240.6" y="763" text-anchor="middle" font-family="Liberation Sans" font-size="8" fill="#222">16</text>
<rect x="265.2" y="756" width="12.5" height="8" fill="#fff"/>
<text x="271.5" y="763" text-anchor="middle" font-family="Liberation Sans" font-size="8" fill="#222">19</text>
<rect x="296.1" y="756" width="12.5" height="8" fill="#fff"/>
<text x="302.4" y="763" text-anchor="middle" font-family="Liberation Sans" font-size="8" fill="#222">22</text>
<rect x="327.1" y="756" width="12.5" height="8" fill="#fff"/>
<text x="333.3" y="763" text-anchor="middle" font-family="Liberation Sans" font-size="8" fill="#222">25</text>
<rect x="358.0" y="756" width="12.5" height="8" fill="#fff"/>
<text x="364.2" y="763" text-anchor="middle" font-family="Liberation Sans" font-size="8" fill="#222">28</text>
<rect x="388.9" y="756" width="12.5" height="8" fill="#fff"/>
<text x="395.1" y="763" text-anchor="middle" font-family="Liberation Sans" font-size="8" fill="#222">31</text>
<rect x="419.8" y="756" width="12.5" height="8" fill="#fff"/>
<text x="426.0" y="763" text-anchor="middle" font-family="Liberation Sans" font-size="8" fill="#222">34</text>
<rect x="450.6" y="756" width="12.5" height="8" fill="#fff"/>
<text x="456.9" y="763" text-anchor="middle" font-family="Liberation Sans" font-size="8" fill="#222">37</text>
<rect x="481.6" y="756" width="12.5" height="8" fill="#fff"/>
<text x="487.8" y="763" text-anchor="middle" font-family="Liberation Sans" font-size="8" fill="#222">40</text>
<rect x="512.5" y="756" width="12.5" height="8" fill="#fff"/>
<text x="518.7" y="763" text-anchor="middle" font-family="Liberation Sans" font-size="8" fill="#222">43</text>
<rect x="543.4" y="756" width="12.5" height="8" fill="#fff"/>
<text x="549.6" y="763" text-anchor="middle" font-family="Liberation Sans" font-size="8" fill="#222">46</text>
<rect x="574.2" y="756" width="12.5" height="8" fill="#fff"/>
<text x="580.5" y="763" text-anchor="middle" font-family="Liberation Sans" font-size="8" fill="#222">49</text>
<rect x="605.2" y="756" width="12.5" height="8" fill="#fff"/>
<text x="611.4" y="763" text-anchor="middle" font-family="Liberation Sans" font-size="8" fill="#222">52</text>
<rect x="636.0" y="756" width="12.5" height="8" fill="#fff"/>
<text x="642.3" y="763" text-anchor="middle" font-family="Liberation Sans" font-size="8" fill="#222">55</text>
<rect x="667.0" y="756" width="12.5" height="8" fill="#fff"/>
<text x="673.2" y="763" text-anchor="middle" font-family="Liberation Sans" font-size="8" fill="#222">58</text>
<rect x="697.9" y="756" width="12.5" height="8" fill="#fff"/>
<text x="704.1" y="763" text-anchor="middle" font-family="Liberation Sans" font-size="8" fill="#222">61</text>
<rect x="728.8" y="756" width="12.5" height="8" fill="#fff"/>
<text x="735.0" y="763" text-anchor="middle" font-family="Liberation Sans" font-size="8" fill="#222">64</text>
<rect x="759.7" y="756" width="12.5" height="8" fill="#fff"/>
<text x="765.9" y="763" text-anchor="middle" font-family="Liberation Sans" font-size="8" fill="#222">67</text>
<rect x="780.2" y="756" width="12.5" height="8" fill="#fff"/>
<text x="786.5" y="763" text-anchor="middle" font-family="Liberation Sans" font-size="8" fill="#222">69</text>
<g opacity="0.55"><rect x="99.2" y="750.1" width="13.5" height="7.5" rx="3.75" fill="#f4f000"/><rect x="101.2" y="752.2" width="9.6" height="3.4" rx="1.2" fill="#0a56d4" stroke="#0a3c9c" stroke-width="0.6"/><text transform="translate(109.50 748.1) rotate(-90) scale(0.87 1)" font-family="Liberation Sans" font-size="10.8" fill="#1a62d8" stroke="#fff" stroke-opacity="0.8" stroke-width="1.4" paint-order="stroke">CHLT-DT</text></g>
<g opacity="1.00"><rect x="130.2" y="669.1" width="13.5" height="7.5" rx="3.75" fill="#f4f000"/><rect x="132.2" y="671.1" width="9.6" height="3.4" rx="1.2" fill="#0a56d4" stroke="#0a3c9c" stroke-width="0.6"/><text transform="translate(140.49 667.0) rotate(-90) scale(0.87 1)" font-family="Liberation Sans" font-size="10.8" fill="#1a62d8" stroke="#fff" stroke-opacity="0.8" stroke-width="1.4" paint-order="stroke">CFTM-DT</text></g>
<g opacity="1.00"><rect x="150.9" y="670.1" width="13.5" height="7.5" rx="3.75" fill="#f4f000"/><rect x="152.8" y="672.2" width="9.6" height="3.4" rx="1.2" fill="#0a56d4" stroke="#0a3c9c" stroke-width="0.6"/><text transform="translate(161.15 668.1) rotate(-90) scale(0.87 1)" font-family="Liberation Sans" font-size="10.8" fill="#1a62d8" stroke="#fff" stroke-opacity="0.8" stroke-width="1.4" paint-order="stroke">CFCF-DT</text></g>
<g opacity="1.00"><rect x="161.2" y="713.1" width="13.5" height="7.5" rx="3.75" fill="#f4f000"/><rect x="163.2" y="715.1" width="9.6" height="3.4" rx="1.2" fill="#0a56d4" stroke="#0a3c9c" stroke-width="0.6"/><text transform="translate(171.48 711.0) rotate(-90) scale(0.87 1)" font-family="Liberation Sans" font-size="10.8" fill="#1a62d8" stroke="#fff" stroke-opacity="0.8" stroke-width="1.4" paint-order="stroke">WVNY-DT</text></g>
<g opacity="1.00"><rect x="215.2" y="695.9" width="9.6" height="3.4" rx="1.2" fill="#0a56d4" stroke="#0a3c9c" stroke-width="0.6"/><text transform="translate(223.50 691.8) rotate(-90) scale(0.87 1)" font-family="Liberation Sans" font-size="10.8" fill="#1a62d8" stroke="#fff" stroke-opacity="0.8" stroke-width="1.4" paint-order="stroke">WPTZ-DT</text></g>
<g opacity="1.00"><rect x="225.5" y="686.7" width="9.6" height="3.4" rx="1.2" fill="#0a56d4" stroke="#0a3c9c" stroke-width="0.6"/><text transform="translate(233.80 682.6) rotate(-90) scale(0.87 1)" font-family="Liberation Sans" font-size="10.8" fill="#1a62d8" stroke="#fff" stroke-opacity="0.8" stroke-width="1.4" paint-order="stroke">CKMI-DT-1</text></g>
<g opacity="1.00"><rect x="235.8" y="752.3" width="9.6" height="3.4" rx="1.2" fill="#0a56d4" stroke="#0a3c9c" stroke-width="0.6"/><text transform="translate(244.10 748.2) rotate(-90) scale(0.87 1)" font-family="Liberation Sans" font-size="10.8" fill="#1a62d8" stroke="#fff" stroke-opacity="0.8" stroke-width="1.4" paint-order="stroke">W16AL</text></g>
<g opacity="1.00"><rect x="266.7" y="687.5" width="9.6" height="3.4" rx="1.2" fill="#0a56d4" stroke="#0a3c9c" stroke-width="0.6"/><text transform="translate(275.00 683.4) rotate(-90) scale(0.87 1)" font-family="Liberation Sans" font-size="10.8" fill="#1a62d8" stroke="#fff" stroke-opacity="0.8" stroke-width="1.4" paint-order="stroke">CBFT-DT</text></g>
<g opacity="1.00"><rect x="287.3" y="687.9" width="9.6" height="3.4" rx="1.2" fill="#0a56d4" stroke="#0a3c9c" stroke-width="0.6"/><text transform="translate(295.60 683.8) rotate(-90) scale(0.87 1)" font-family="Liberation Sans" font-size="10.8" fill="#1a62d8" stroke="#fff" stroke-opacity="0.8" stroke-width="1.4" paint-order="stroke">CBMT-DT</text></g>
<g opacity="1.00"><rect x="297.6" y="690.7" width="9.6" height="3.4" rx="1.2" fill="#0a56d4" stroke="#0a3c9c" stroke-width="0.6"/><text transform="translate(305.90 686.6) rotate(-90) scale(0.87 1)" font-family="Liberation Sans" font-size="10.8" fill="#1a62d8" stroke="#fff" stroke-opacity="0.8" stroke-width="1.4" paint-order="stroke">WCAX-DT</text></g>
<g opacity="1.00"><rect x="400.6" y="702.7" width="9.6" height="3.4" rx="1.2" fill="#0a56d4" stroke="#0a3c9c" stroke-width="0.6"/><text transform="translate(408.90 698.6) rotate(-90) scale(0.87 1)" font-family="Liberation Sans" font-size="10.8" fill="#1a62d8" stroke="#fff" stroke-opacity="0.8" stroke-width="1.4" paint-order="stroke">WETK-DT</text></g>
<g opacity="1.00"><rect x="431.5" y="749.1" width="9.6" height="3.4" rx="1.2" fill="#0a56d4" stroke="#0a3c9c" stroke-width="0.6"/><text transform="translate(439.80 745.0) rotate(-90) scale(0.87 1)" font-family="Liberation Sans" font-size="10.8" fill="#1a62d8" stroke="#fff" stroke-opacity="0.8" stroke-width="1.4" paint-order="stroke">CFJP-DT</text></g>
<g opacity="1.00"><rect x="462.4" y="698.1" width="9.6" height="3.4" rx="1.2" fill="#0a56d4" stroke="#0a3c9c" stroke-width="0.6"/><text transform="translate(470.70 694.0) rotate(-90) scale(0.87 1)" font-family="Liberation Sans" font-size="10.8" fill="#1a62d8" stroke="#fff" stroke-opacity="0.8" stroke-width="1.4" paint-order="stroke">WCFE-DT</text></g>
<g opacity="1.00"><rect x="513.9" y="706.4" width="9.6" height="3.4" rx="1.2" fill="#0a56d4" stroke="#0a3c9c" stroke-width="0.6"/><text transform="translate(522.20 702.3) rotate(-90) scale(0.87 1)" font-family="Liberation Sans" font-size="10.8" fill="#1a62d8" stroke="#fff" stroke-opacity="0.8" stroke-width="1.4" paint-order="stroke">WFFF-DT</text></g>
</svg>
</div></body></html>
